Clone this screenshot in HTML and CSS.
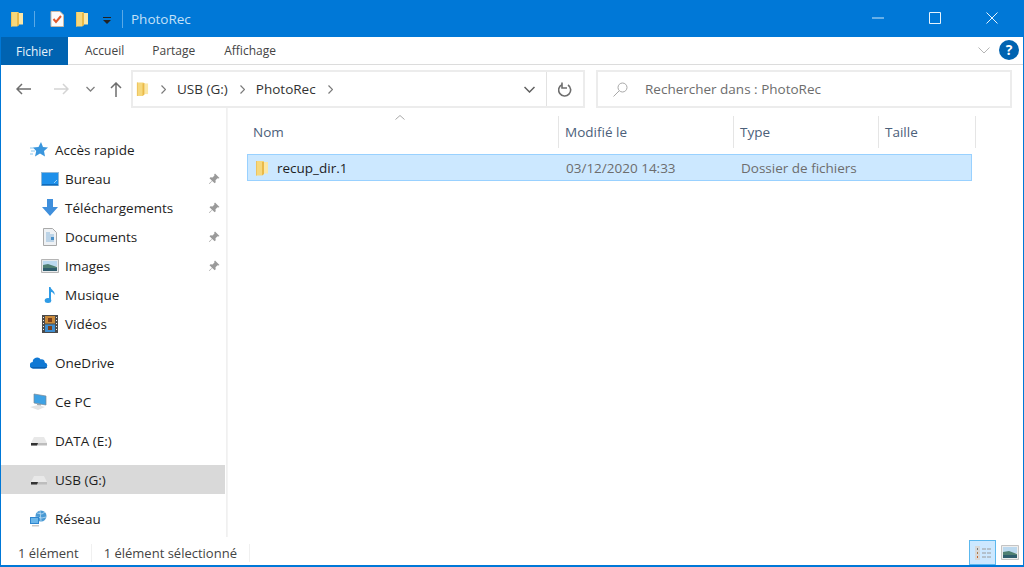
FILE: index.html
```html
<!DOCTYPE html>
<html lang="fr">
<head>
<meta charset="utf-8">
<title>PhotoRec</title>
<link rel="stylesheet" href="styles.css">
</head>
<body>
<svg class="defs" width="0" height="0" aria-hidden="true">
  <defs>
    <symbol id="folder" viewBox="0 0 14 16">
      <path d="M1 1h7l1 1v12l-2 1.500H1z" fill="#f6d87c"/>
      <path d="M8 2h5v11.500H8z" fill="#fbe7a6"/>
      <path d="M7 2l2-.5V14l-2 1.500z" fill="#e9b949"/>
      <path d="M1 1h1v14.500H1z" fill="#eec35f"/>
    </symbol>
    <symbol id="drive" viewBox="0 0 18 12">
      <path d="M4 2h10l3 6H1z" fill="#e8e8e8"/>
      <path d="M1 8h16v2.500H1z" fill="#bdbdbd"/>
      <path d="M1 8h7l-1 2.500H1z" fill="#333"/>
    </symbol>
    <symbol id="pin" viewBox="0 0 12 12">
      <path d="M7 .5l4.500 4.500-1.200.6-.8-.4-2 2 .2 2-1 1L4.200 8 1.500 11 1 10.500 4 7.800 1.500 5.300l1-1 2 .2 2-2-.4-.8z" fill="#9a9a9a"/>
    </symbol>
  </defs>
</svg>

<div class="window">
  <header class="titlebar">
    <div class="qat">
      <svg class="ico-folder"><use href="#folder"/></svg>
      <span class="qat-sep qat-sep-a"></span>
      <svg class="ico-check" viewBox="0 0 14 16">
        <path d="M1 .5h9l3.500 3.500v11.500H1z" fill="#fbfbfb" stroke="#c9b9a8"/>
        <path d="M3.500 8l2.500 3 5-6" fill="none" stroke="#e2582b" stroke-width="2"/>
      </svg>
      <svg class="ico-folder ico-folder-b"><use href="#folder"/></svg>
      <svg class="ico-drop" viewBox="0 0 8 7">
        <path d="M0 0h8v1H0z" fill="#222"/>
        <path d="M0 3h8L4 7z" fill="#222"/>
      </svg>
      <span class="qat-sep qat-sep-b"></span>
      <span class="title-text">PhotoRec</span>
    </div>
    <div class="winbtns">
      <svg class="winbtn" viewBox="0 0 12 12"><path d="M0 6h12" stroke="#cde6f8" fill="none"/></svg>
      <svg class="winbtn" viewBox="0 0 12 12"><path d="M.5.500h11v11H.500z" stroke="#e6f3fc" fill="none"/></svg>
      <svg class="winbtn" viewBox="0 0 12 12"><path d="M.5.500l11 11M11.500.500l-11 11" stroke="#e6f3fc" fill="none"/></svg>
    </div>
  </header>

  <nav class="ribbon">
    <span class="tab tab-file">Fichier</span>
    <span class="tab tab-home">Accueil</span>
    <span class="tab tab-share">Partage</span>
    <span class="tab tab-view">Affichage</span>
    <span class="ribbon-space"></span>
    <svg class="ribbon-chev" viewBox="0 0 12 7"><path d="M.5.500L6 6l5.500-5.500" fill="none" stroke="#b5b5b5"/></svg>
    <span class="help">?</span>
  </nav>

  <div class="addressrow">
    <svg class="nav-ico nav-back" viewBox="0 0 15 12"><path d="M15 6H1M6 1L1 6l5 5" fill="none" stroke="#6e6e6e" stroke-width="1.500"/></svg>
    <svg class="nav-ico nav-fwd" viewBox="0 0 15 12"><path d="M0 6h14M9 1l5 5-5 5" fill="none" stroke="#d4d4d4" stroke-width="1.500"/></svg>
    <svg class="nav-chev" viewBox="0 0 9 6"><path d="M.5 1l4 4 4-4" fill="none" stroke="#808080" stroke-width="1.300"/></svg>
    <svg class="nav-ico nav-up" viewBox="0 0 12 15"><path d="M6 15V1M1 6l5-5 5 5" fill="none" stroke="#6e6e6e" stroke-width="1.500"/></svg>
    <div class="addressbox">
      <svg class="ico-folder addr-folder"><use href="#folder"/></svg>
      <svg class="crumb-chev" viewBox="0 0 5 9"><path d="M.5.500l4 4-4 4" fill="none" stroke="#7a7a7a" stroke-width="1.200"/></svg>
      <span class="crumb">USB (G:)</span>
      <svg class="crumb-chev" viewBox="0 0 5 9"><path d="M.5.500l4 4-4 4" fill="none" stroke="#7a7a7a" stroke-width="1.200"/></svg>
      <span class="crumb">PhotoRec</span>
      <svg class="crumb-chev" viewBox="0 0 5 9"><path d="M.5.500l4 4-4 4" fill="none" stroke="#7a7a7a" stroke-width="1.200"/></svg>
      <span class="addr-space"></span>
      <svg class="addr-drop" viewBox="0 0 11 7"><path d="M.5 1l5 5 5-5" fill="none" stroke="#606060" stroke-width="1.500"/></svg>
      <span class="addr-refresh">
        <svg class="refresh-ico" viewBox="0 0 14 15"><path d="M4 2.600A6 6 0 1 0 10 3" fill="none" stroke="#6e6e6e" stroke-width="1.600"/><path d="M8 0v5.500h5" fill="none" stroke="#6e6e6e" stroke-width="1.600" transform="translate(-4 .5)"/></svg>
      </span>
    </div>
    <div class="searchbox">
      <svg class="search-ico" viewBox="0 0 15 15"><circle cx="9.500" cy="5.500" r="4.500" fill="none" stroke="#a8a8a8"/><path d="M6.200 8.800L.5 14.500" stroke="#a8a8a8" fill="none"/></svg>
      <span class="search-text">Rechercher dans : PhotoRec</span>
    </div>
  </div>

  <div class="content">
    <aside class="sidebar">
      <ul class="navgroup">
        <li class="navitem level-0">
          <svg class="navico" viewBox="0 0 18 18"><path d="M11 1l2 5 5 .5-4 3.500 1 5.500-5-3-5 3 1.200-5.500L3 6.500l5.500-.5z" fill="#3a96dd"/><path d="M0 7h4M1 10h4M0 13h3" stroke="#8cc8f0" fill="none"/></svg>
          <span class="navlabel">Accès rapide</span>
        </li>
        <li class="navitem level-1">
          <svg class="navico" viewBox="0 0 18 18"><path d="M0 2h18v14H0z" fill="#8fb8d8"/><path d="M1 3h16v11H1z" fill="#1e90ea"/><path d="M1 14h16v1.500H1z" fill="#0f6cbd"/><path d="M13 13l3-3" stroke="#9bd3f8" fill="none"/></svg>
          <span class="navlabel">Bureau</span>
          <svg class="pinico"><use href="#pin"/></svg>
        </li>
        <li class="navitem level-1">
          <svg class="navico" viewBox="0 0 18 18"><path d="M6 0h6v8h5l-8 9-8-9h5z" fill="#3f8fdc"/></svg>
          <span class="navlabel">Téléchargements</span>
          <svg class="pinico"><use href="#pin"/></svg>
        </li>
        <li class="navitem level-1">
          <svg class="navico" viewBox="0 0 18 18"><path d="M2.500.500h9l4 4v13h-13z" fill="#eef1f4" stroke="#a9a9a9"/><path d="M5 5h4M5 7h8M5 9h8M5 11h8M5 13h8" stroke="#8ab6da" fill="none"/><path d="M10 9h3v3h-3z" fill="#4a90c8"/></svg>
          <span class="navlabel">Documents</span>
          <svg class="pinico"><use href="#pin"/></svg>
        </li>
        <li class="navitem level-1">
          <svg class="navico" viewBox="0 0 18 18"><path d="M.5 2.500h17v13H.500z" fill="#e8eaec" stroke="#b4b4b4"/><path d="M2 4h14v5H2z" fill="#bcd9ef"/><path d="M2 8l5-1 9 3v4H2z" fill="#4f7f72"/><path d="M2 11h14v3H2z" fill="#2f5d6d"/></svg>
          <span class="navlabel">Images</span>
          <svg class="pinico"><use href="#pin"/></svg>
        </li>
        <li class="navitem level-1">
          <svg class="navico" viewBox="0 0 18 18"><path d="M8 1h1.500c.5 3 5 4 4 8-1-2-2-3-3.500-3v8.500H8z" fill="#2e9be6"/><ellipse cx="7" cy="14.500" rx="3.300" ry="2.500" fill="#2e9be6"/></svg>
          <span class="navlabel">Musique</span>
        </li>
        <li class="navitem level-1">
          <svg class="navico" viewBox="0 0 18 18"><path d="M1 0h16v18H1z" fill="#4b4b4b"/><path d="M4 1h10v7.500H4z" fill="#c98a3a"/><path d="M4 9.500h10V17H4z" fill="#3e8ed0"/><path d="M7 3h4v4H7zM7 11h4v4H7z" fill="#7a3f1c"/><path d="M2 2h1v1H2zM2 5h1v1H2zM2 8h1v1H2zM2 11h1v1H2zM2 14h1v1H2zM15 2h1v1h-1zM15 5h1v1h-1zM15 8h1v1h-1zM15 11h1v1h-1zM15 14h1v1h-1z" fill="#eee"/></svg>
          <span class="navlabel">Vidéos</span>
        </li>
      </ul>
      <ul class="navgroup">
        <li class="navitem level-0">
          <svg class="navico" viewBox="0 0 20 14"><path d="M3.500 13A3.500 3.500 0 0 1 3 6a5 5 0 0 1 9-3 4 4 0 0 1 4.500 3.500A3.300 3.300 0 0 1 16.500 13z" fill="#0f78d4"/><path d="M1 11.500h18A3 3 0 0 1 16.500 13h-13A3.500 3.500 0 0 1 1 11.500z" fill="#0a5fb0"/></svg>
          <span class="navlabel">OneDrive</span>
        </li>
      </ul>
      <ul class="navgroup">
        <li class="navitem level-0">
          <svg class="navico" viewBox="0 0 18 18"><path d="M4 1l12 2v9L4 10z" fill="#3ea2e5" stroke="#7a8a96" stroke-width=".7"/><path d="M0 14l8-2 7 2-7 3z" fill="#e4e4e4"/><path d="M7 10.500l4 .5v1.500L7 12z" fill="#9aa5ad"/></svg>
          <span class="navlabel">Ce PC</span>
        </li>
      </ul>
      <ul class="navgroup">
        <li class="navitem level-0">
          <svg class="navico"><use href="#drive"/></svg>
          <span class="navlabel">DATA (E:)</span>
        </li>
      </ul>
      <ul class="navgroup">
        <li class="navitem level-0 is-current">
          <svg class="navico"><use href="#drive"/></svg>
          <span class="navlabel">USB (G:)</span>
        </li>
      </ul>
      <ul class="navgroup">
        <li class="navitem level-0">
          <svg class="navico" viewBox="0 0 18 18"><circle cx="11" cy="6" r="5.500" fill="#4a9ad4"/><path d="M7 3l5 1 3-2M6 7l6 1 4-1M10 1l1 10" stroke="#bcdcf2" stroke-width=".8" fill="none"/><path d="M0 7h9v7H0z" fill="#2f86cf"/><path d="M1 8h7v5H1z" fill="#6ab6ea"/><path d="M2 15h7v1.500H2z" fill="#c8c8c8"/></svg>
          <span class="navlabel">Réseau</span>
        </li>
      </ul>
    </aside>

    <main class="filepane">
      <svg class="sort-arrow" viewBox="0 0 10 5"><path d="M.5 4.500L5 .5l4.500 4" fill="none" stroke="#a8a8a8"/></svg>
      <div class="headers grid-cols">
        <span class="col-head">Nom</span>
        <span class="col-head">Modifié le</span>
        <span class="col-head">Type</span>
        <span class="col-head">Taille</span>
      </div>
      <div class="filerow grid-cols">
        <span class="cell cell-name"><svg class="ico-folder row-folder"><use href="#folder"/></svg>recup_dir.1</span>
        <span class="cell cell-meta">03/12/2020 14:33</span>
        <span class="cell cell-meta">Dossier de fichiers</span>
        <span class="cell cell-meta"></span>
      </div>
    </main>
  </div>

  <footer class="statusbar">
    <span class="status-item status-a">1 élément</span>
    <span class="status-item status-b">1 élément sélectionné</span>
    <span class="status-space"></span>
    <span class="viewbtn is-on">
      <svg class="viewico" viewBox="0 0 18 18"><path d="M1 2h5v14H1z" fill="#d8d8d8"/><path d="M3 4h1v2H3z" fill="#7a7a7a"/><path d="M3 8h1v2H3z" fill="#a87a4a"/><path d="M3 12h1v2H3z" fill="#c8642a"/><path d="M8 5h4M13 5h4M8 9h4M13 9h4M8 13h4M13 13h4" stroke="#9a9a9a" fill="none"/></svg>
    </span>
    <span class="viewbtn">
      <svg class="viewico viewico-large" viewBox="0 0 18 15"><path d="M.5.500h17v14H.500z" fill="#eee" stroke="#c4c4c4"/><path d="M2 2h14v6H2z" fill="#bcd9ef"/><path d="M2 7l6-1 8 3v4H2z" fill="#4f7f72"/><path d="M2 10h14v3H2z" fill="#2f5d6d"/></svg>
    </span>
  </footer>
</div>
</body>
</html>
```
FILE: styles.css
```css
* { box-sizing: border-box; }

html, body {
  margin: 0;
  height: 100%;
  overflow: hidden;
}

body {
  font-family: "Open Sans", "Noto Sans", "Liberation Sans", sans-serif;
  font-size: 13.500px;
  color: #1e1e1e;
  background: #fff;
}

.defs { display: block; height: 0; }

.window {
  height: 567px;
  display: flex;
  flex-direction: column;
  border-left: 1px solid #0078d7;
  border-right: 1px solid #0078d7;
  border-bottom: 2px solid #0078d7;
}

/* Title bar */
.titlebar {
  height: 37px;
  flex: none;
  margin: 0 -1px;
  background: #0078d7;
  display: flex;
  align-items: center;
  justify-content: space-between;
}

.qat { display: flex; align-items: center; padding-left: 10px; }

.ico-folder { width: 14px; height: 16px; flex: none; }

.qat-sep { width: 1px; height: 16px; background: #5aa9e6; flex: none; }
.qat-sep-a { margin-left: 10px; }
.qat-sep-b { margin-left: 11px; height: 18px; }

.ico-check { width: 14px; height: 16px; margin-left: 15px; flex: none; }
.ico-folder-b { margin-left: 11px; }
.ico-drop { width: 8px; height: 7px; margin-left: 14px; margin-top: 3px; flex: none; }

.title-text {
  margin-left: 8px;
  color: #c4e1f7;
  font-size: 13.500px;
}

.winbtns { display: flex; align-items: center; margin-right: 26px; gap: 45px; margin-top: -1px; }
.winbtn { width: 12px; height: 12px; flex: none; }

/* Ribbon */
.ribbon {
  height: 28px;
  flex: none;
  display: flex;
  align-items: stretch;
  border-bottom: 1px solid #dcdcdc;
  font-size: 12px;
  color: #444;
}

.tab { display: flex; align-items: center; }

.tab-file {
  width: 67px;
  margin-bottom: -1px;
  justify-content: center;
  background: #0063b1;
  color: #e8f2fa;
}

.tab-home { margin-left: 17px; }
.tab-share { margin-left: 28px; }
.tab-view { margin-left: 29px; }

.ribbon-space { flex: 1; }

.ribbon-chev { width: 12px; height: 7px; align-self: center; flex: none; }

.help {
  width: 20px;
  height: 20px;
  margin: 3px 4px 0 9px;
  border-radius: 50%;
  background: #0063b1;
  color: #fff;
  font-weight: 700;
  font-size: 14px;
  line-height: 20px;
  text-align: center;
  flex: none;
}

/* Address row */
.addressrow {
  height: 43px;
  flex: none;
  padding-top: 5px;
  padding-right: 11px;
  display: flex;
  align-items: center;
}

.nav-ico { flex: none; }
.nav-back { width: 15px; height: 12px; margin-left: 15px; }
.nav-fwd { width: 15px; height: 12px; margin-left: 23px; }
.nav-chev { width: 9px; height: 6px; margin-left: 17px; flex: none; }
.nav-up { width: 12px; height: 15px; margin-left: 15px; }

.addressbox {
  width: 454px;
  height: 38px;
  margin-left: 9px;
  border: 2px solid #ececec;
  display: flex;
  align-items: center;
  flex: none;
  font-size: 13.500px;
}

.addr-folder { margin-left: 3px; width: 13px; }

.crumb-chev { width: 5px; height: 9px; margin-left: 12px; flex: none; }
.crumb { margin-left: 11px; color: #333; }

.addr-space { flex: 1; }

.addr-drop { width: 11px; height: 7px; margin-right: 11px; flex: none; }

.addr-refresh {
  width: 37px;
  align-self: stretch;
  border-left: 1px solid #e2e2e2;
  display: flex;
  align-items: center;
  justify-content: center;
  flex: none;
}

.refresh-ico { width: 14px; height: 15px; }

.searchbox {
  flex: 1;
  height: 38px;
  margin-left: 11px;
  border: 2px solid #ececec;
  display: flex;
  align-items: center;
  color: #6d6d6d;
}

.search-ico { width: 15px; height: 15px; margin-left: 15px; flex: none; }
.search-text { margin-left: 17px; }

/* Content */
.content { flex: 1; min-height: 0; display: flex; }

.sidebar {
  width: 226px;
  flex: none;
  margin-bottom: 3px;
  padding-top: 27px;
  border-right: 1px solid #f0f0f0;
  position: relative;
}

.sidebar::after {
  content: "";
  position: absolute;
  top: 0;
  bottom: 0;
  right: -2px;
  width: 1px;
  background: #f4f4f4;
}

.navgroup { list-style: none; margin: 0 0 10px; padding: 0; }

.navitem {
  height: 29px;
  display: flex;
  align-items: center;
  margin-right: 1px;
}

.level-0 { padding-left: 29px; }
.level-1 { padding-left: 40px; }

.navico { width: 18px; height: 18px; flex: none; }

.level-0 .navlabel { margin-left: 7px; }
.level-1 .navlabel { margin-left: 6px; }

.navlabel { flex: 1; }

.pinico { width: 12px; height: 12px; margin-right: 5px; flex: none; }

.is-current { background: #d9d9d9; }

/* File pane */
.filepane { flex: 1; min-width: 0; position: relative; padding-left: 20px; }

.sort-arrow {
  position: absolute;
  left: 168px;
  top: 7px;
  width: 10px;
  height: 5px;
}

.grid-cols {
  display: grid;
  grid-template-columns: 312px 175px 145px 97px;
}

.headers { margin-top: 8px; height: 32px; color: #4c607a; }

.col-head {
  display: flex;
  align-items: center;
  padding-left: 6px;
  border-right: 1px solid #e5e5e5;
}

.filerow {
  margin-top: 6px;
  width: 725px;
  height: 27px;
  background: #cce8ff;
  border: 1px solid #99d1ff;
  align-items: center;
}

.cell { display: flex; align-items: center; }

.cell-name { padding-left: 7px; color: #1e1e1e; }
.cell-meta { padding-left: 6px; color: #6d6d6d; }

.row-folder { margin-right: 8px; }

/* Status bar */
.statusbar {
  height: 25px;
  flex: none;
  display: flex;
  align-items: center;
  font-size: 13px;
  color: #444;
}

.status-item {
  display: flex;
  align-items: center;
  height: 18px;
  border-right: 1px solid #f0f0f0;
}

.status-a { padding-left: 17px; padding-right: 12px; }
.status-b { padding-left: 12px; padding-right: 12px; }

.status-space { flex: 1; }

.viewbtn {
  width: 27px;
  height: 25px;
  display: flex;
  align-items: center;
  justify-content: center;
  border: 1px solid transparent;
  flex: none;
}

.viewbtn.is-on { background: #cce8ff; border: 1px solid #5cb8ee; }

.viewico { width: 18px; height: 18px; }
.viewico-large { width: 18px; height: 15px; }
```
